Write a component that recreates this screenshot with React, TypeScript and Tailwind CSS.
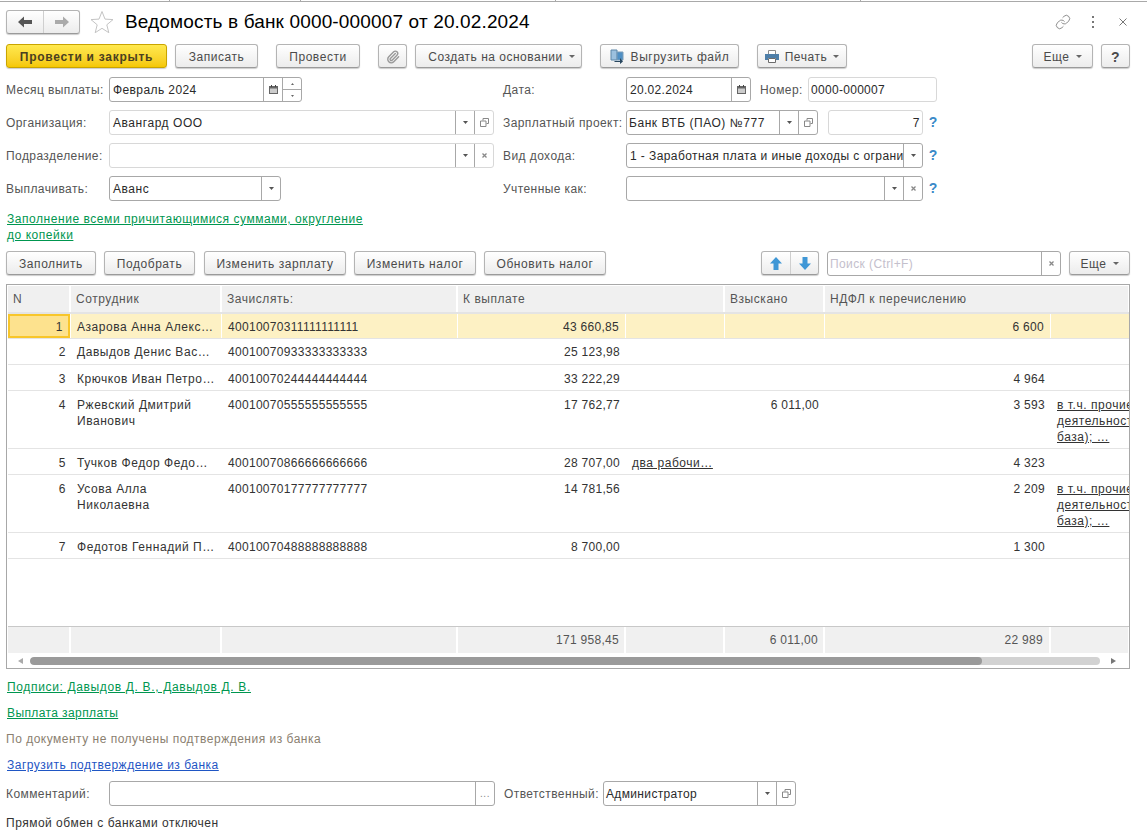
import React from "react";
import { Paperclip, Link as LinkIcon } from "lucide-react";

const Caret = ({ small }: { small?: boolean }) =>
  small ? (
    <svg width="5" height="3" viewBox="0 0 5 3" className="shrink-0"><path d="M0 0h5L2.5 3z" fill="#555" /></svg>
  ) : (
    <svg width="6" height="3" viewBox="0 0 6 3" className="shrink-0"><path d="M0 0h6L3 3z" fill="#666" /></svg>
  );

const ArrowH = ({ dir, color }: { dir: "l" | "r"; color: string }) => (
  <svg width="14" height="12" viewBox="0 0 14 12" className={dir === "r" ? "rotate-180" : ""}>
    <path d="M0 6l6-5.5V4h8v4H6v3.5z" fill={color} />
  </svg>
);

const ArrowV = ({ dir }: { dir: "u" | "d" }) => (
  <svg width="12" height="13" viewBox="0 0 12 13" className={dir === "d" ? "rotate-180" : ""}>
    <path d="M6 0l6 6.5H8.5V13h-5V6.5H0z" fill="#3f97d6" />
  </svg>
);

const Calendar = () => (
  <svg width="9" height="9" viewBox="0 0 9 9"><path d="M0 1h9v8H0z" fill="#666" /><path d="M1 3.5h7V8H1z" fill="#ccc" /><path d="M2 0h1v2H2zM6 0h1v2H6z" fill="#444" /></svg>
);

const OpenIcon = () => (
  <svg width="9" height="9" viewBox="0 0 9 9" fill="none" stroke="#888"><path d="M3 2.5V.5h5.5v5H6.5" /><path d="M.5 3h5.5v5.5H.5z" /></svg>
);

const ClearIcon = () => (
  <svg width="5" height="5" viewBox="0 0 5 5" stroke="#888" strokeWidth="1.3"><path d="M.5.5l4 4M4.5.5l-4 4" /></svg>
);

const Help = () => (
  <span className="ml-[3px] w-[14px] -mt-[2px] text-center text-[14px] font-bold tracking-normal text-[#3a8ac8]">?</span>
);

function Btn({ w, children, className = "" }: { w: string; children: React.ReactNode; className?: string }) {
  return (
    <div
      className={
        "h-[24px] pt-px flex items-center justify-center gap-[6px] shrink-0 rounded-[3px] border border-[#b4b4b4] border-b-[#9a9a9a] bg-gradient-to-b from-white to-[#ececec] shadow-[0_1px_1px_rgba(0,0,0,0.2)] text-[#4b4b4b] " +
        w + " " + className
      }
    >
      {children}
    </div>
  );
}

function Field({
  w,
  text,
  btns = [],
  dark,
  right,
  track = "",
  pl = "pl-[3px]",
}: {
  w: string;
  text?: string;
  btns?: React.ReactNode[];
  dark?: boolean;
  right?: boolean;
  track?: string;
  pl?: string;
}) {
  return (
    <div className={"h-[25px] flex shrink-0 rounded-[3px] border bg-white overflow-hidden " + w + " " + (dark ? "border-[#a8a8a8]" : "border-[#d8d8d8]")}>
      <div className={"flex-1 min-w-0 flex items-center whitespace-nowrap overflow-hidden text-[#2a2a2a] " + pl + (right ? " justify-end pr-[2px] " : " ") + track}>{text}</div>
      {btns.map((b, i) => (
        <div key={i} className="w-[19px] shrink-0 flex items-center justify-center border-l border-[#a8a8a8]">{b}</div>
      ))}
    </div>
  );
}

const Label = ({ w, children }: { w: string; children: React.ReactNode }) => (
  <div className={"shrink-0 text-[#555] whitespace-nowrap tracking-[0.42px] " + w}>{children}</div>
);

const cols = [
  "w-[63px]",
  "w-[151px]",
  "w-[236px]",
  "w-[168px]",
  "w-[99px]",
  "w-[100px]",
  "w-[226px]",
  "w-[79px]",
];

type Row = {
  n: number;
  name: string[];
  acc: string;
  sum: string;
  note?: string;
  fine?: string;
  tax?: string;
  tall?: boolean;
};

const rows: Row[] = [
  { n: 1, name: ["Азарова Анна Алекс…"], acc: "40010070311111111111", sum: "43 660,85", tax: "6 600" },
  { n: 2, name: ["Давыдов Денис Вас…"], acc: "40010070933333333333", sum: "25 123,98" },
  { n: 3, name: ["Крючков Иван Петро…"], acc: "40010070244444444444", sum: "33 222,29", tax: "4 964" },
  { n: 4, name: ["Ржевский Дмитрий", "Иванович"], acc: "40010070555555555555", sum: "17 762,77", fine: "6 011,00", tax: "3 593", tall: true },
  { n: 5, name: ["Тучков Федор Федо…"], acc: "40010070866666666666", sum: "28 707,00", note: "два рабочи…", tax: "4 323" },
  { n: 6, name: ["Усова Алла", "Николаевна"], acc: "40010070177777777777", sum: "14 781,56", tax: "2 209", tall: true },
  { n: 7, name: ["Федотов Геннадий П…"], acc: "40010070488888888888", sum: "8 700,00", tax: "1 300" },
];

function TableRow({ r }: { r: Row }) {
  const active = r.n === 1;
  const h = r.tall ? "h-[58px]" : r.n === 1 ? "h-[25px]" : "h-[26px]";
  const pt = r.n >= 3 ? "pt-[6px]" : "pt-[5px]";
  const cell = "shrink-0 overflow-hidden whitespace-nowrap " + pt + " " + (active ? "bg-[#fdf1c4] border-r border-white " : "");
  const num = "text-right tracking-[0.3px] pl-[6px] ";
  return (
    <div className={"flex border-b border-[#e4e4e4] text-[#333] " + h}>
      <div className={"shrink-0 text-right pr-[5px] " + (active ? "w-[62px] bg-[#fde28e] border-2 border-[#f8c62a] mr-px pt-[3px]" : "w-[63px] " + pt)}>{r.n}</div>
      <div className={cell + "px-[6px] " + cols[1]}>
        {r.name.map((s) => <div key={s}>{s}</div>)}
      </div>
      <div className={cell + "px-[6px] tracking-[0.3px] " + cols[2]}>{r.acc}</div>
      <div className={cell + num + "pr-[6px] " + cols[3]}>{r.sum}</div>
      <div className={cell + "px-[6px] " + cols[4]}>{r.note && <span className="underline">{r.note}</span>}</div>
      <div className={cell + num + "pr-[6px] " + cols[5]}>{r.fine}</div>
      <div className={cell + num + "pr-[6px] " + cols[6]}>{r.tax}</div>
      <div className={"shrink-0 pl-[6px] overflow-hidden whitespace-nowrap underline " + pt + " " + cols[7] + (active ? " bg-[#fdf1c4]" : "")}>
        {r.tall && (
          <>
            <div>в т.ч. прочие</div>
            <div>деятельность</div>
            <div>база); …</div>
          </>
        )}
      </div>
    </div>
  );
}

export default function App() {
  return (
    <div className="w-[1147px] h-[836px] overflow-hidden bg-white text-[12px] leading-[16px] tracking-[0.55px] font-['Liberation_Sans',sans-serif]">
      {/* top strip */}
      <div className="h-[2px] border-b border-[#a9a9a9] flex">
        <div className="w-[170px] h-px border-r border-[#a9a9a9]" />
        <div className="w-[131px] h-px border-r border-[#a9a9a9]" />
        <div className="w-[255px] h-px border-r border-[#a9a9a9]" />
        <div className="w-[305px] h-px border-r border-[#a9a9a9]" />
      </div>

      {/* title */}
      <div className="h-[24px] mt-[8px] flex items-center pl-[6px] pr-[20px]">
        <div className="w-[74px] h-[24px] flex rounded-[3px] border border-[#b4b4b4] border-b-[#9a9a9a] bg-gradient-to-b from-white to-[#ececec] shadow-[0_1px_1px_rgba(0,0,0,0.2)]">
          <div className="w-[37px] flex items-center justify-center border-r border-[#cfcfcf]"><ArrowH dir="l" color="#555" /></div>
          <div className="flex-1 flex items-center justify-center"><ArrowH dir="r" color="#aaa" /></div>
        </div>
        <svg width="24" height="24" viewBox="0 0 24 24" className="ml-[10px]" fill="none" stroke="#c4c4c4">
          <path d="M12 1.5l3 7.6 8 .5-6.2 5.2 2 7.9L12 18.3l-6.8 4.4 2-7.9L1 9.6l8-.5z" />
        </svg>
        <div className="ml-[11px] text-[19px] leading-[24px] tracking-[0.15px] text-black whitespace-nowrap">Ведомость в банк 0000-000007 от 20.02.2024</div>
        <div className="ml-auto flex items-center">
          <LinkIcon size={16} strokeWidth={1.1} color="#666" />
          <svg width="4" height="12" viewBox="0 0 4 12" className="ml-[20px]" fill="#777"><path d="M1 0h2v2H1zM1 5h2v2H1zM1 10h2v2H1z" /></svg>
          <svg width="8" height="8" viewBox="0 0 8 8" className="ml-[24px]" stroke="#777"><path d="M.5.5l7 7M7.5.5l-7 7" /></svg>
        </div>
      </div>

      {/* command bar */}
      <div className="h-[24px] mt-[10px] flex pl-[6px] pr-[17px]">
        <div className="w-[161px] h-[24px] pt-px flex items-center justify-center rounded-[3px] border border-[#c9a400] bg-gradient-to-b from-[#ffe94d] to-[#f5c800] shadow-[0_1px_1px_rgba(0,0,0,0.2)] font-bold text-[#4a4020] tracking-[0.72px]">Провести и закрыть</div>
        <Btn w="w-[83px]" className="ml-[8px]">Записать</Btn>
        <Btn w="w-[84px]" className="ml-[18px]">Провести</Btn>
        <Btn w="w-[29px]" className="ml-[18px]"><Paperclip size={14} strokeWidth={2.4} color="#999" /></Btn>
        <Btn w="w-[167px]" className="ml-[8px] pl-[6px] tracking-[0.5px]">Создать на основании <Caret /></Btn>
        <Btn w="w-[139px]" className="ml-[18px]">
          <svg width="15" height="15" viewBox="0 0 15 15">
            <path d="M1 1h6v10H1z" fill="#9cc0de" stroke="#5d86a8" />
            <path d="M7 3h6v8H7z" fill="#4f8fc4" stroke="#7b9cb8" />
            <path d="M5 12h5V9l3 3.5L10 15v-2H4z" fill="#28465e" />
          </svg>
          Выгрузить файл
        </Btn>
        <Btn w="w-[90px]" className="ml-[18px]">
          <svg width="14" height="13" viewBox="0 0 14 13">
            <path d="M3.5 .5h7v4h-7z" fill="#fff" stroke="#8a8a8a" />
            <path d="M0 4h14v6h-3V8H3v2H0z" fill="#4d7ea8" />
            <path d="M3.5 8.5h7v4h-7z" fill="#fff" stroke="#6c6c6c" />
          </svg>
          Печать <Caret />
        </Btn>
        <Btn w="w-[61px]" className="ml-auto">Еще <Caret /></Btn>
        <Btn w="w-[29px]" className="ml-[8px] font-bold text-[14px]">?</Btn>
      </div>

      {/* form */}
      <div className="mt-[9px] pl-[6px] flex flex-col gap-[8px]">
        <div className="flex items-center h-[25px]">
          <Label w="w-[103px]">Месяц выплаты:</Label>
          <div className="w-[394px] shrink-0 flex">
            <div className="w-[193px] h-[25px] flex rounded-[3px] border border-[#a8a8a8] overflow-hidden">
              <div className="flex-1 flex items-center pl-[3px] text-[#2a2a2a] tracking-[0.4px]">Февраль 2024</div>
              <div className="w-[19px] flex items-center justify-center border-l border-[#a8a8a8]"><Calendar /></div>
              <div className="w-[19px] flex flex-col border-l border-[#a8a8a8]">
                <div className="flex-1 flex items-center justify-center border-b border-[#a8a8a8]"><svg width="3" height="2" viewBox="0 0 3 2"><path d="M1.5 0L3 2H0z" fill="#666" /></svg></div>
                <div className="flex-1 flex items-center justify-center"><svg width="3" height="2" viewBox="0 0 3 2"><path d="M0 0h3L1.5 2z" fill="#666" /></svg></div>
              </div>
            </div>
          </div>
          <Label w="w-[123px]">Дата:</Label>
          <Field w="w-[125px]" text="20.02.2024" track="tracking-[0.3px]" dark btns={[<Calendar key="c" />]} />
          <Label w="w-[48px] ml-[9px]">Номер:</Label>
          <Field w="w-[129px]" text="0000-000007" track="tracking-[0.3px]" pl="pl-[2px]" />
        </div>

        <div className="flex items-center h-[25px]">
          <Label w="w-[103px]">Организация:</Label>
          <div className="w-[394px] shrink-0"><Field w="w-[385px]" text="Авангард ООО" btns={[<Caret small key="a" />, <OpenIcon key="b" />]} /></div>
          <Label w="w-[123px]">Зарплатный проект:</Label>
          <Field w="w-[192px]" text="Банк ВТБ (ПАО) №777" dark pl="pl-[2px]" btns={[<Caret small key="a" />, <OpenIcon key="b" />]} />
          <Field w="w-[95px] ml-[10px]" text="7" right />
          <Help />
        </div>

        <div className="flex items-center h-[25px]">
          <Label w="w-[103px]">Подразделение:</Label>
          <div className="w-[394px] shrink-0"><Field w="w-[385px]" btns={[<Caret small key="a" />, <ClearIcon key="b" />]} /></div>
          <Label w="w-[123px]">Вид дохода:</Label>
          <Field w="w-[297px]" text="1 - Заработная плата и иные доходы с ограни" track="tracking-[0.42px]" dark btns={[<Caret small key="a" />]} />
          <Help />
        </div>

        <div className="flex items-center h-[25px]">
          <Label w="w-[103px]">Выплачивать:</Label>
          <div className="w-[394px] shrink-0"><Field w="w-[172px]" text="Аванс" dark btns={[<Caret small key="a" />]} /></div>
          <Label w="w-[123px]">Учтенные как:</Label>
          <Field w="w-[297px]" dark btns={[<Caret small key="a" />, <ClearIcon key="b" />]} />
          <Help />
        </div>
      </div>

      <div className="mt-[10px] ml-[7px] w-[370px] text-[#00964f] underline">
        Заполнение всеми причитающимися суммами, округление до копейки
      </div>

      {/* table command bar */}
      <div className="h-[24px] mt-[8px] flex pl-[6px] pr-[17px]">
        <Btn w="w-[90px]">Заполнить</Btn>
        <Btn w="w-[91px]" className="ml-[8px]">Подобрать</Btn>
        <Btn w="w-[142px]" className="ml-[9px]">Изменить зарплату</Btn>
        <Btn w="w-[122px]" className="ml-[8px]">Изменить налог</Btn>
        <Btn w="w-[122px]" className="ml-[8px]">Обновить налог</Btn>
        <div className="ml-[155px] w-[58px] h-[24px] flex rounded-[3px] border border-[#b4b4b4] border-b-[#9a9a9a] bg-gradient-to-b from-white to-[#ececec] shadow-[0_1px_1px_rgba(0,0,0,0.2)]">
          <div className="w-[29px] flex items-center justify-center border-r border-[#cfcfcf]"><ArrowV dir="u" /></div>
          <div className="flex-1 flex items-center justify-center"><ArrowV dir="d" /></div>
        </div>
        <div className="ml-[8px] w-[234px] h-[25px] flex rounded-[3px] border border-[#a8a8a8] overflow-hidden">
          <div className="flex-1 flex items-center pl-[2px] text-[#c4c0cc] tracking-[0.4px]">Поиск (Ctrl+F)</div>
          <div className="w-[19px] flex items-center justify-center border-l border-[#a8a8a8]"><ClearIcon /></div>
        </div>
        <Btn w="w-[61px]" className="ml-[8px]">Еще <Caret /></Btn>
      </div>

      {/* table */}
      <div className="mt-[9px] ml-[6px] w-[1124px] h-[385px] border border-[#a8a8a8] pl-px flex flex-col overflow-hidden">
        <div className="h-[28px] mt-px flex shrink-0 border-b-2 border-[#e4e4e4] text-[#555]">
          {[
            ["N", "w-[63px]"],
            ["Сотрудник", "w-[151px]"],
            ["Зачислять:", "w-[236px]"],
            ["К выплате", "w-[267px]"],
            ["Взыскано", "w-[100px]"],
            ["НДФЛ к перечислению", "w-[305px]"],
          ].map(([t, w]) => (
            <div key={t} className={"shrink-0 bg-[#f0f0f0] border-r-2 border-white flex items-center pl-[5px] " + w}>{t}</div>
          ))}
        </div>
        <div className="flex-1 min-h-0">
          {rows.map((r) => <TableRow key={r.n} r={r} />)}
        </div>
        <div className="h-[27px] shrink-0 flex border-t border-[#c8c8c8] text-[#555] tracking-[0.3px]">
          {["", "", "", "171 958,45", "", "6 011,00", "22 989", ""].map((t, i) => (
            <div key={i} className={"shrink-0 bg-[#f0f0f0] border-r-2 border-white flex items-center justify-end " + cols[i] + (i === 6 ? " pr-[6px]" : " pr-[5px]")}>{t}</div>
          ))}
        </div>
        <div className="h-[15px] shrink-0 flex items-center">
          <svg width="5" height="6" viewBox="0 0 5 6" className="ml-[10px]"><path d="M5 0v6L0 3z" fill="#aaa" /></svg>
          <div className="ml-[7px] w-[1070px] h-[8px] rounded-[4px] bg-[#d2d2d2] overflow-hidden">
            <div className="w-[952px] h-full rounded-[4px] bg-[#9a9a9a]" />
          </div>
          <svg width="5" height="6" viewBox="0 0 5 6" className="ml-[11px]"><path d="M0 0v6l5-3z" fill="#777" /></svg>
        </div>
      </div>

      {/* bottom */}
      <div className="mt-[10px] ml-[7px] text-[#00964f] underline tracking-[0.65px]">Подписи: Давыдов Д. В., Давыдов Д. В.</div>
      <div className="mt-[10px] ml-[7px] text-[#00964f] underline tracking-[0.4px]">Выплата зарплаты</div>
      <div className="mt-[10px] ml-[6px] text-[#8a8070] tracking-[0.5px]">По документу не получены подтверждения из банка</div>
      <div className="mt-[10px] ml-[7px] text-[#1f56c4] underline tracking-[0.5px]">Загрузить подтверждение из банка</div>
      <div className="mt-[8px] pl-[6px] flex items-center h-[25px]">
        <Label w="w-[103px]">Комментарий:</Label>
        <Field w="w-[386px]" dark btns={[<span key="d" className="text-[#888] text-[10px]">...</span>]} />
        <Label w="w-[99px] ml-[9px]">Ответственный:</Label>
        <Field w="w-[193px]" text="Администратор" track="tracking-[0.35px]" dark pl="pl-[2px]" btns={[<Caret small key="a" />, <OpenIcon key="b" />]} />
      </div>
      <div className="mt-[9px] ml-[6px] text-[#333] tracking-[0.5px]">Прямой обмен с банками отключен</div>
    </div>
  );
}
